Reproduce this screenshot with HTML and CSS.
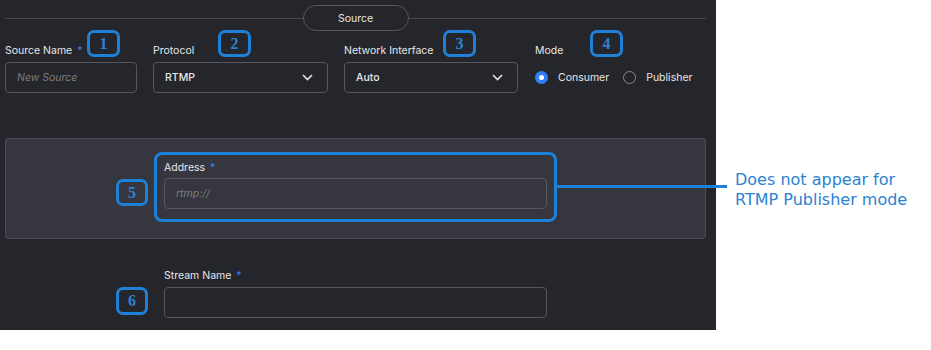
FILE: index.html
```html
<!DOCTYPE html>
<html lang="en">
<head>
    <meta charset="UTF-8">
    <title>Source settings</title>
    <link rel="stylesheet" href="styles.css">
</head>
<body>
    <div class="page">
        <div class="panel">
            <div class="section-head">
                <span class="pill">Source</span>
            </div>

            <div class="fields">
                <div class="field field-name">
                    <label>Source Name <span class="req">*</span></label>
                    <div class="input placeholder">New Source</div>
                    <span class="badge b1">1</span>
                </div>
                <div class="field field-protocol">
                    <label>Protocol</label>
                    <div class="input select">
                        <span>RTMP</span>
                        <svg width="11" height="7" viewBox="0 0 11 7"><polyline points="1,1 5.5,5.5 10,1" fill="none" stroke="#e4e4e6" stroke-width="1.6"/></svg>
                    </div>
                    <span class="badge b2">2</span>
                </div>
                <div class="field field-iface">
                    <label>Network Interface</label>
                    <div class="input select">
                        <span>Auto</span>
                        <svg width="11" height="7" viewBox="0 0 11 7"><polyline points="1,1 5.5,5.5 10,1" fill="none" stroke="#e4e4e6" stroke-width="1.6"/></svg>
                    </div>
                    <span class="badge b3">3</span>
                </div>
                <div class="field field-mode">
                    <label>Mode</label>
                    <div class="radios">
                        <span class="radio checked"></span>
                        <span class="radio-label">Consumer</span>
                        <span class="radio"></span>
                        <span class="radio-label">Publisher</span>
                    </div>
                    <span class="badge b4">4</span>
                </div>
            </div>

            <div class="gray-box">
                <span class="badge badge-side">5</span>
                <div class="highlight">
                    <label>Address <span class="req">*</span></label>
                    <div class="input wide placeholder">rtmp://</div>
                </div>
            </div>

            <div class="stream-row">
                <span class="badge badge-side">6</span>
                <div class="stream-field">
                    <label>Stream Name <span class="req">*</span></label>
                    <div class="input wide"></div>
                </div>
            </div>
        </div>

        <div class="note">
            Does not appear for<br>
            RTMP Publisher mode
        </div>
    </div>
</body>
</html>
```

FILE: styles.css
```css
:root {
    --panel-bg: #25262b;
    --box-bg: #35363e;
    --line: #46474d;
    --field-border: #56575e;
    --text: #e6e6e8;
    --muted: #7c7c82;
    --callout: #1f80d8;
    --callout-text: #2a82d4;
}

* {
    margin: 0;
    padding: 0;
    box-sizing: border-box;
}

body {
    background: #fff;
    font-family: Inter, "Open Sans", sans-serif;
    font-size: 10.5px;
    color: var(--text);
}

.page {
    display: flex;
    width: 931px;
    height: 350px;
}

.panel {
    width: 716px;
    height: 330px;
    flex-shrink: 0;
    background: var(--panel-bg);
    padding: 5px 10px 0 5px;
}

/* section header with pill */
.section-head {
    display: flex;
    align-items: center;
    height: 26px;
}

.section-head::before,
.section-head::after {
    content: "";
    flex: 1;
    height: 1px;
    background: var(--line);
}

.pill {
    width: 106px;
    height: 26px;
    border: 1px solid var(--field-border);
    border-radius: 13px;
    display: flex;
    align-items: center;
    justify-content: center;
}

/* top row of fields */
.fields {
    display: flex;
    gap: 16px;
    margin-top: 10px;
}

.field {
    position: relative;
    flex-shrink: 0;
}

.field-name { width: 132px; }
.field-protocol { width: 175px; }
.field-iface { width: 174px; }
.field-mode { flex: 1 1 auto; padding-left: 1px; }

label {
    display: block;
    height: 18px;
    padding-top: 2px;
    line-height: 16px;
    margin-bottom: 3px;
    white-space: nowrap;
}

.req {
    color: #3b82f0;
    margin-left: 2px;
}

.input {
    height: 31px;
    border: 1px solid var(--field-border);
    border-radius: 4px;
    padding: 0 11px;
    display: flex;
    align-items: center;
    font-weight: 500;
}

.input.placeholder {
    color: var(--muted);
    font-style: italic;
    font-weight: 400;
}

.input.wide {
    width: 383px;
}

.select {
    justify-content: space-between;
    padding-right: 14px;
}

.radios {
    height: 31px;
    display: flex;
    align-items: center;
}

.radio {
    width: 13px;
    height: 13px;
    border-radius: 50%;
    border: 1.5px solid #8b8b90;
    margin-right: 10px;
}

.radio.checked {
    border: none;
    background: #2f80f8;
    display: flex;
    align-items: center;
    justify-content: center;
}

.radio.checked::after {
    content: "";
    width: 5px;
    height: 5px;
    border-radius: 50%;
    background: #fff;
}

.radio-label {
    margin-right: 14px;
}

/* numbered callouts */
.badge {
    width: 33px;
    height: 27px;
    border: 3px solid var(--callout);
    border-radius: 7px;
    display: flex;
    align-items: center;
    justify-content: center;
    font-family: "Liberation Serif", serif;
    font-weight: bold;
    font-size: 16px;
    color: var(--callout-text);
}

.field .badge {
    position: absolute;
    top: -11px;
}

.b1 { left: 82px; }
.b2 { left: 65px; }
.b3 { left: 99px; }
.b4 { left: 56px; }

.badge-side {
    width: 32px;
    flex-shrink: 0;
}

/* address block */
.gray-box {
    margin-top: 45px;
    height: 101px;
    background: var(--box-bg);
    border: 1px solid #4b4c54;
    border-radius: 3px;
    display: flex;
    align-items: flex-start;
    gap: 6px;
    padding: 13px 0 0 110px;
}

.gray-box .badge-side {
    margin-top: 27px;
}

.highlight {
    position: relative;
    width: 403px;
    border: 3px solid var(--callout);
    border-radius: 8px;
    padding: 3px 7px 10px;
}

.highlight label {
    margin-bottom: 2px;
}

.highlight::after {
    content: "";
    position: absolute;
    left: calc(100% + 3px);
    top: 30px;
    width: 170px;
    height: 3px;
    background: var(--callout);
}

/* stream name */
.stream-row {
    display: flex;
    align-items: flex-start;
    gap: 16px;
    margin-top: 27px;
    padding-left: 111px;
}

.stream-row .badge-side {
    margin-top: 21px;
    height: 28px;
}

/* note next to the panel */
.note {
    padding: 170px 0 0 19px;
    font-family: "DejaVu Sans", Verdana, sans-serif;
    font-size: 16px;
    line-height: 20px;
    color: var(--callout-text);
    white-space: nowrap;
}
```
